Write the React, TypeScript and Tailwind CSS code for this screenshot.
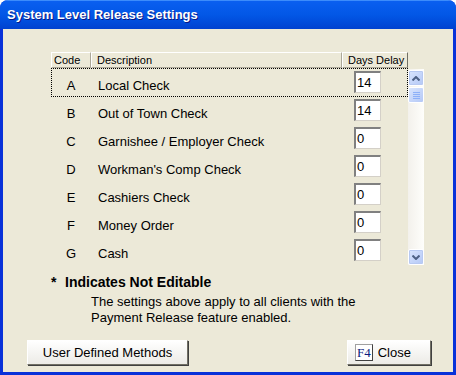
import React from "react";

const rows = [
  ["A", "Local Check", "14"],
  ["B", "Out of Town Check", "14"],
  ["C", "Garnishee / Employer Check", "0"],
  ["D", "Workman's Comp Check", "0"],
  ["E", "Cashiers Check", "0"],
  ["F", "Money Order", "0"],
  ["G", "Cash", "0"],
];

function ScrollBtn({ dir }: { dir: "up" | "down" }) {
  return (
    <div className="w-[16px] h-[16px] rounded-[2px] border border-white bg-gradient-to-br from-[#D9E5FD] to-[#B4C8F6] flex items-center justify-center shadow-[inset_0_0_0_1px_#B7C9F2]">
      <svg width="8" height="5" viewBox="0 0 8 5">
        {dir === "up" ? (
          <path d="M0.5 4.5 L4 1 L7.5 4.5" stroke="#4D6185" strokeWidth="2" fill="none" />
        ) : (
          <path d="M0.5 0.5 L4 4 L7.5 0.5" stroke="#4D6185" strokeWidth="2" fill="none" />
        )}
      </svg>
    </div>
  );
}

export default function App() {
  return (
    <div
      className="w-[456px] h-[375px] flex flex-col rounded-t-[8px] overflow-hidden bg-[#0831D9]"
      style={{ fontFamily: '"Liberation Sans", Arial, sans-serif' }}
    >
      <div className="h-[29px] shrink-0 bg-gradient-to-b from-[#0A5FF0] via-[#0257E6] to-[#0142D0] flex items-center pl-[7px] pb-[1px] border-t border-[#3C8CFB]">
        <span className="text-white font-bold text-[13px] [text-shadow:1px_1px_0_#0A1883]">
          System Level Release Settings
        </span>
      </div>
      <div className="flex-1 min-h-0 mx-[3px] mb-[3px] bg-[#ECE9D8] flex flex-col text-black">
        <div className="ml-[48px] mt-[23px] flex">
          <div className="w-[357px] flex flex-col">
            <div className="h-[16px] flex text-[11px] leading-none">
              <div className="w-[40px] bg-[#ECE9D8] border-t border-l border-white border-r border-r-[#ACA899] border-b border-b-[#ACA899] flex items-center pl-[2px]">
                Code
              </div>
              <div className="w-[251px] border-t border-l border-white border-r border-r-[#ACA899] border-b border-b-[#ACA899] flex items-center pl-[5px]">
                Description
              </div>
              <div className="w-[66px] border-t border-l border-white border-r border-r-[#716F64] border-b border-b-[#ACA899] flex items-center pl-[5px]">
                Days Delay
              </div>
            </div>
            <div className="flex flex-col">
              {rows.map(([c, d, v], i) => (
                <div key={c} className="h-[28px] flex flex-col">
                  <div className={`flex-1 flex items-center text-[13px] ${i === 0 ? "border border-dotted border-black" : "border border-transparent"}`}>
                    <div className="w-[38px] text-center pt-[7px]">{c}</div>
                    <div className="w-[264px] pl-[8px] pt-[7px]">{d}</div>
                    <div className="w-[27px] h-[22px] bg-white border-t-2 border-l-2 border-t-[#808080] border-l-[#808080] border-b border-r border-b-[#D4D0C8] border-r-[#D4D0C8] flex items-center pl-[1px] text-[13px]">
                      {v}
                    </div>
                  </div>
                  <div className="h-[1px] bg-[#ACA899]" />
                  <div className="h-[1px] bg-white" />
                </div>
              ))}
            </div>
          </div>
          <div className="mt-[17px] w-[16px] h-[196px] flex flex-col bg-gradient-to-r from-[#F3F1EC] to-[#FEFEFB]">
            <div className="mt-[1px]"><ScrollBtn dir="up" /></div>
            <div className="mt-[1px] w-[16px] h-[16px] rounded-[2px] border border-white bg-gradient-to-br from-[#D9E5FD] to-[#B4C8F6] flex flex-col items-center justify-center gap-[1px]">
              <div className="w-[7px] h-[1px] bg-[#8CB0F8]" />
              <div className="w-[7px] h-[1px] bg-[#8CB0F8]" />
              <div className="w-[7px] h-[1px] bg-[#8CB0F8]" />
              <div className="w-[7px] h-[1px] bg-[#8CB0F8]" />
            </div>
            <div className="flex-1" />
            <ScrollBtn dir="down" />
          </div>
        </div>
        <div className="ml-[48px] mt-[7px] flex items-baseline font-bold text-[14px]">
          <span className="w-[14px]">*</span>
          <span>Indicates Not Editable</span>
        </div>
        <div className="ml-[88px] mt-[1px] text-[13px] leading-[16px]">
          <div>The settings above apply to all clients with the</div>
          <div>Payment Release feature enabled.</div>
        </div>
        <div className="mt-[14px] flex justify-between pl-[24px] pr-[22px]">
          <button className="w-[161px] h-[25px] bg-gradient-to-b from-[#FFFFFF] to-[#ECEBE6] border border-[#716F64] border-t-white border-l-white shadow-[1px_1px_0_#404040] text-[13px] flex items-center justify-center">
            User Defined Methods
          </button>
          <button className="w-[84px] h-[25px] bg-gradient-to-b from-[#FFFFFF] to-[#ECEBE6] border border-[#716F64] border-t-white border-l-white shadow-[1px_1px_0_#404040] text-[13px] flex items-center pl-[7px] gap-[5px]">
            <span className="h-[17px] px-[1px] border border-[#404040] border-t-[#A0A0A0] border-l-[#A0A0A0] bg-white text-[#0A1B7E] text-[13px] leading-[15px]" style={{ fontFamily: '"Liberation Serif", serif' }}>
              F4
            </span>
            <span>Close</span>
          </button>
        </div>
      </div>
    </div>
  );
}
